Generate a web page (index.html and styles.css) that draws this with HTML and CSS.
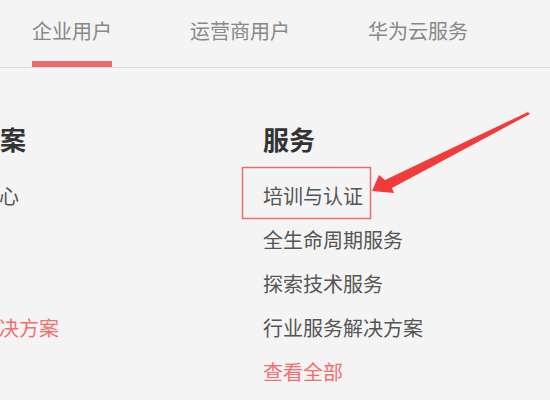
FILE: index.html
```html
<!DOCTYPE html>
<html lang="zh-CN">

<head>
    <meta charset="UTF-8" />
    <meta name="viewport" content="width=device-width, initial-scale=1.0" />
    <title>华为 - 服务</title>
    <link rel="stylesheet" href="styles.css">
</head>

<body>
    <div class="tabs">
        <a class="tab active">企业用户</a>
        <a class="tab">运营商用户</a>
        <a class="tab">华为云服务</a>
    </div>

    <div class="menu">
        <div class="menu-col left">
            <h3>解决方案</h3>
            <ul>
                <li>华为云中心</li>
                <li>合作伙伴</li>
                <li>开发者</li>
                <li class="more">全场景解决方案</li>
            </ul>
        </div>
        <div class="menu-col">
            <h3>服务</h3>
            <ul>
                <li>培训与认证</li>
                <li>全生命周期服务</li>
                <li>探索技术服务</li>
                <li>行业服务解决方案</li>
                <li class="more">查看全部</li>
            </ul>
        </div>
    </div>

    <!-- annotation drawn over the page -->
    <svg class="mark" width="550" height="400" viewBox="0 0 550 400">
        <rect x="242.5" y="167.5" width="128" height="51" fill="none" stroke="#ea7070" stroke-width="1.5" />
        <polygon points="372,191 379,175 385,180 528,112 530,114 392,188 394,193" fill="#f23b3b" />
    </svg>
</body>

</html>
```

FILE: styles.css
```css
* {
    box-sizing: border-box;
}

body {
    margin: 0;
    height: 400px;
    overflow: hidden;
    position: relative;
    background-color: #f4f4f4;
    font-family: "Noto Sans CJK SC", "Noto Sans", sans-serif;
}

.tabs {
    display: flex;
    gap: 78px;
    padding: 0 0 0 32px;
    border-bottom: 1px solid #dcdcdc;
}

.tab {
    padding: 17px 0 16px;
    font-size: 20px;
    line-height: 28px;
    color: #888;
    border-bottom: 6px solid transparent;
}

.tab.active {
    border-bottom-color: #ef6b6b;
}

.menu {
    display: flex;
    margin-left: -81px;
}

.menu-col {
    flex: 1;
}

.menu-col.left {
    flex: 0 0 344px;
}

.menu-col h3 {
    margin: 54px 0 18px;
    font-size: 26px;
    line-height: 34px;
    font-weight: bold;
    color: #333;
}

.menu-col.left h3 {
    margin-left: 3px;
}

.menu-col ul {
    list-style: none;
    margin: 0;
    padding: 0;
}

.menu-col li {
    font-size: 20px;
    line-height: 44px;
    color: #555;
    white-space: nowrap;
}

.menu-col li.more {
    color: #f36f6f;
}

.mark {
    position: absolute;
    top: 0;
    left: 0;
    pointer-events: none;
}
```
